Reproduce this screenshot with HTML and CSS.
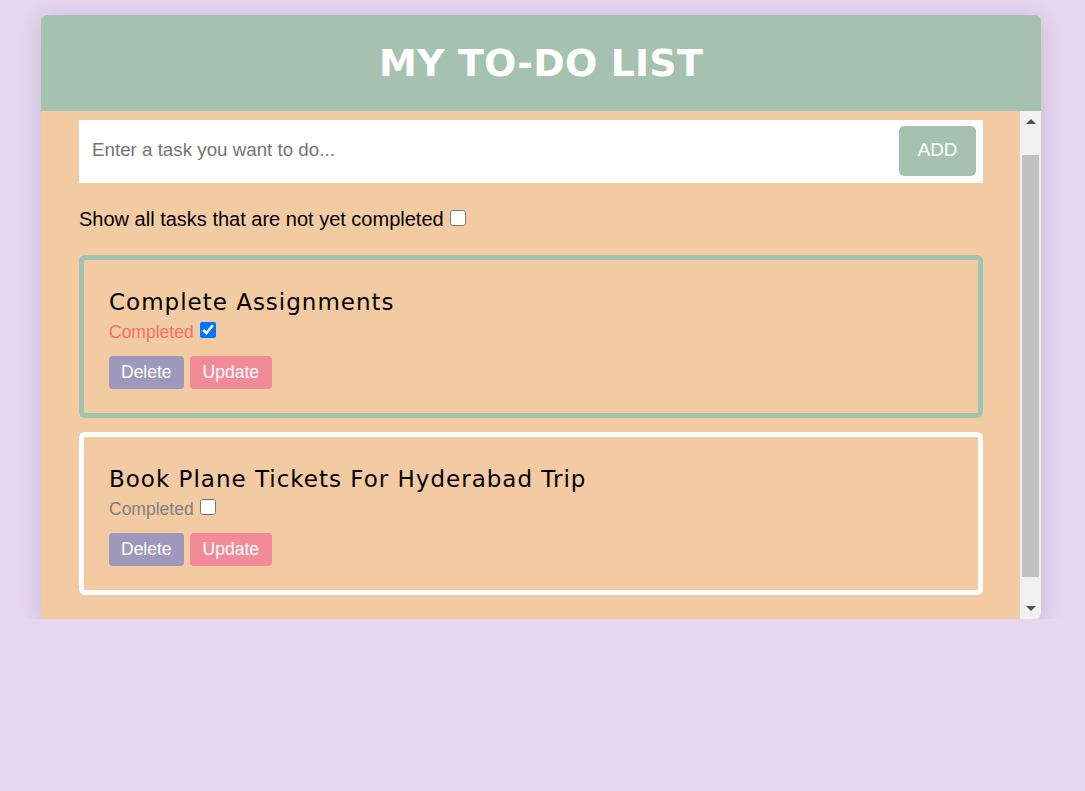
FILE: index.html
```html
<!DOCTYPE html>
<html lang="en">
<head>
<meta charset="utf-8">
<title>My To-Do List</title>
<link rel="stylesheet" href="styles.css">
</head>
<body>
  <div class="app">
    <header class="app-header">
      <h1 class="app-title">MY TO-DO LIST</h1>
    </header>
    <div class="app-body">
      <main class="content">
        <form class="task-form">
          <input class="task-input" type="text" placeholder="Enter a task you want to do...">
          <button class="add-btn" type="button">ADD</button>
        </form>
        <label class="filter">Show all tasks that are not yet completed<input class="filter-check" type="checkbox"></label>
        <ul class="task-list">
          <li class="task task-done">
            <h2 class="task-title">Complete Assignments</h2>
            <label class="task-status status-done">Completed<input class="status-check" type="checkbox" checked></label>
            <div class="task-actions">
              <button class="btn btn-delete" type="button">Delete</button>
              <button class="btn btn-update" type="button">Update</button>
            </div>
          </li>
          <li class="task task-open">
            <h2 class="task-title">Book Plane Tickets For Hyderabad Trip</h2>
            <label class="task-status status-open">Completed<input class="status-check" type="checkbox"></label>
            <div class="task-actions">
              <button class="btn btn-delete" type="button">Delete</button>
              <button class="btn btn-update" type="button">Update</button>
            </div>
          </li>
        </ul>
      </main>
      <div class="scrollbar" aria-hidden="true">
        <div class="sb-button"><span class="arrow-up"></span></div>
        <div class="sb-track"><div class="sb-thumb"></div></div>
        <div class="sb-button"><span class="arrow-down"></span></div>
      </div>
    </div>
  </div>
</body>
</html>
```
FILE: styles.css
```css
* { box-sizing: border-box; }

body {
  margin: 0;
  background: #e6d6ef;
  font-family: "Liberation Sans", Arial, sans-serif;
}

.app {
  width: 1000px;
  margin: 15px 0 0 41px;
  border-radius: 6px;
  overflow: hidden;
  box-shadow: 0 4px 22px rgba(90, 70, 110, 0.22);
}

.app-header {
  height: 96px;
  background: #a5c2b0;
  display: flex;
  align-items: center;
  justify-content: center;
}

.app-title {
  margin: 0;
  color: #fff;
  font-family: "DejaVu Sans", Verdana, sans-serif;
  font-weight: bold;
  font-size: 38px;
  letter-spacing: 0.15px;
  line-height: 1;
}

.app-body {
  display: flex;
  height: 508px;
  background: #f3cba2;
}

.content {
  flex: 1;
  padding: 9px 37px 0 38px;
  overflow: hidden;
}

.task-form {
  display: flex;
  align-items: flex-start;
  height: 63px;
  margin: 0;
  background: #fff;
  padding: 6px 7px 0 13px;
}

.task-input {
  flex: 1;
  height: 50px;
  border: none;
  outline: none;
  padding: 0 0 3px;
  font-family: "Liberation Sans", Arial, sans-serif;
  font-size: 18.75px;
  color: #333;
  background: transparent;
}

.task-input::placeholder { color: #757575; }

.add-btn {
  width: 77px;
  height: 50px;
  border: none;
  border-radius: 5px;
  background: #a5c2b0;
  color: #fff;
  font-family: "Liberation Sans", Arial, sans-serif;
  font-size: 18.75px;
  padding: 0 0 2px;
}

.filter {
  display: block;
  margin-top: 26px;
  font-size: 20px;
  line-height: 20px;
  color: #000;
}

.filter-check,
.status-check {
  width: 16px;
  height: 16px;
  margin: 0 0 0 6px;
  vertical-align: baseline;
}

.task-list {
  list-style: none;
  margin: 26px 0 0;
  padding: 0;
  display: flex;
  flex-direction: column;
  gap: 14px;
}

.task {
  border: 5px solid #fff;
  border-radius: 6px;
  padding: 29px 25px 24px;
}

.task-done { border-color: #9fc4b2; }
.task-open { border-color: #fff; }

.task-title {
  margin: 0 0 6px;
  font-family: "DejaVu Sans", Verdana, sans-serif;
  font-weight: normal;
  font-size: 23px;
  letter-spacing: 1px;
  line-height: 27px;
  color: #000;
}

.task-status {
  display: block;
  font-size: 17.5px;
  line-height: 20px;
}

.status-done { color: #ff6b6b; }
.status-open { color: #808080; }

.task-actions {
  display: flex;
  gap: 6px;
  margin-top: 14px;
}

.btn {
  height: 33px;
  border: none;
  border-radius: 4px;
  padding: 0 12px;
  color: #fff;
  font-family: "Liberation Sans", Arial, sans-serif;
  font-size: 17.5px;
}

.btn-delete { background: #9f98bd; }
.btn-update { background: #f28a97; padding: 0 13px; }

.scrollbar {
  width: 21px;
  display: flex;
  flex-direction: column;
  background: #f1f1f1;
}

.sb-button {
  height: 21px;
  display: flex;
  align-items: center;
  justify-content: center;
}

.arrow-up,
.arrow-down {
  width: 0;
  height: 0;
  border-left: 5px solid transparent;
  border-right: 5px solid transparent;
}

.arrow-up { border-bottom: 5px solid #505050; }
.arrow-down { border-top: 5px solid #505050; }

.sb-track {
  flex: 1;
  display: flex;
  flex-direction: column;
  padding: 23px 2px 21px;
}

.sb-thumb {
  flex: 1;
  background: #c1c1c1;
}
```
